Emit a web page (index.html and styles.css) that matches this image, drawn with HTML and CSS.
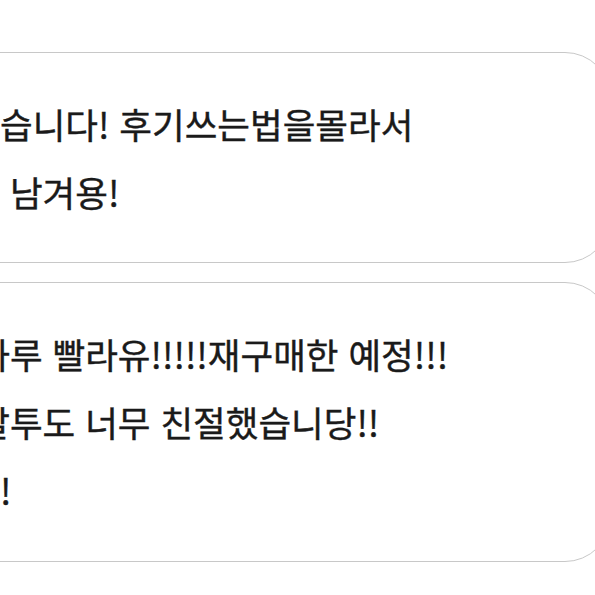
FILE: index.html
```html
<!DOCTYPE html>
<html lang="ko">
<head>
<meta charset="utf-8">
<link rel="stylesheet" href="styles.css">
</head>
<body>
<main class="reviews">
  <section class="card card-first">
    <p class="line">잘받았습니다! 후기쓰는법을몰라서</p>
    <p class="line">이제야 남겨용!</p>
  </section>
  <section class="card card-second">
    <p class="line">택배 하루 빨라유!!!!!재구매한 예정!!!</p>
    <p class="line">사장 말투도 너무 친절했습니당!!</p>
    <p class="line">좋아요!</p>
  </section>
</main>
</body>
</html>
```
FILE: styles.css
```css
html, body {
  margin: 0;
  padding: 0;
  background: #ffffff;
  overflow: hidden;
}
body {
  width: 595px;
  height: 595px;
  font-family: "Noto Sans CJK KR", "Noto Sans", sans-serif;
  color: #1a1a1a;
}
.reviews {
  padding-top: 52px;
  display: flex;
  flex-direction: column;
  gap: 19px;
}
.card {
  box-sizing: border-box;
  margin-left: -140px;
  width: 751px;
  border: 1px solid #c8c8c8;
  border-radius: 46px;
  padding: 37px 0 36px 41px;
  background: #ffffff;
}
.card-second {
  padding-bottom: 37px;
}
.line {
  margin: 0;
  font-size: 35.5px;
  font-weight: 400;
  -webkit-text-stroke: 0.4px #1a1a1a;
  line-height: 68px;
  white-space: nowrap;
}
```
